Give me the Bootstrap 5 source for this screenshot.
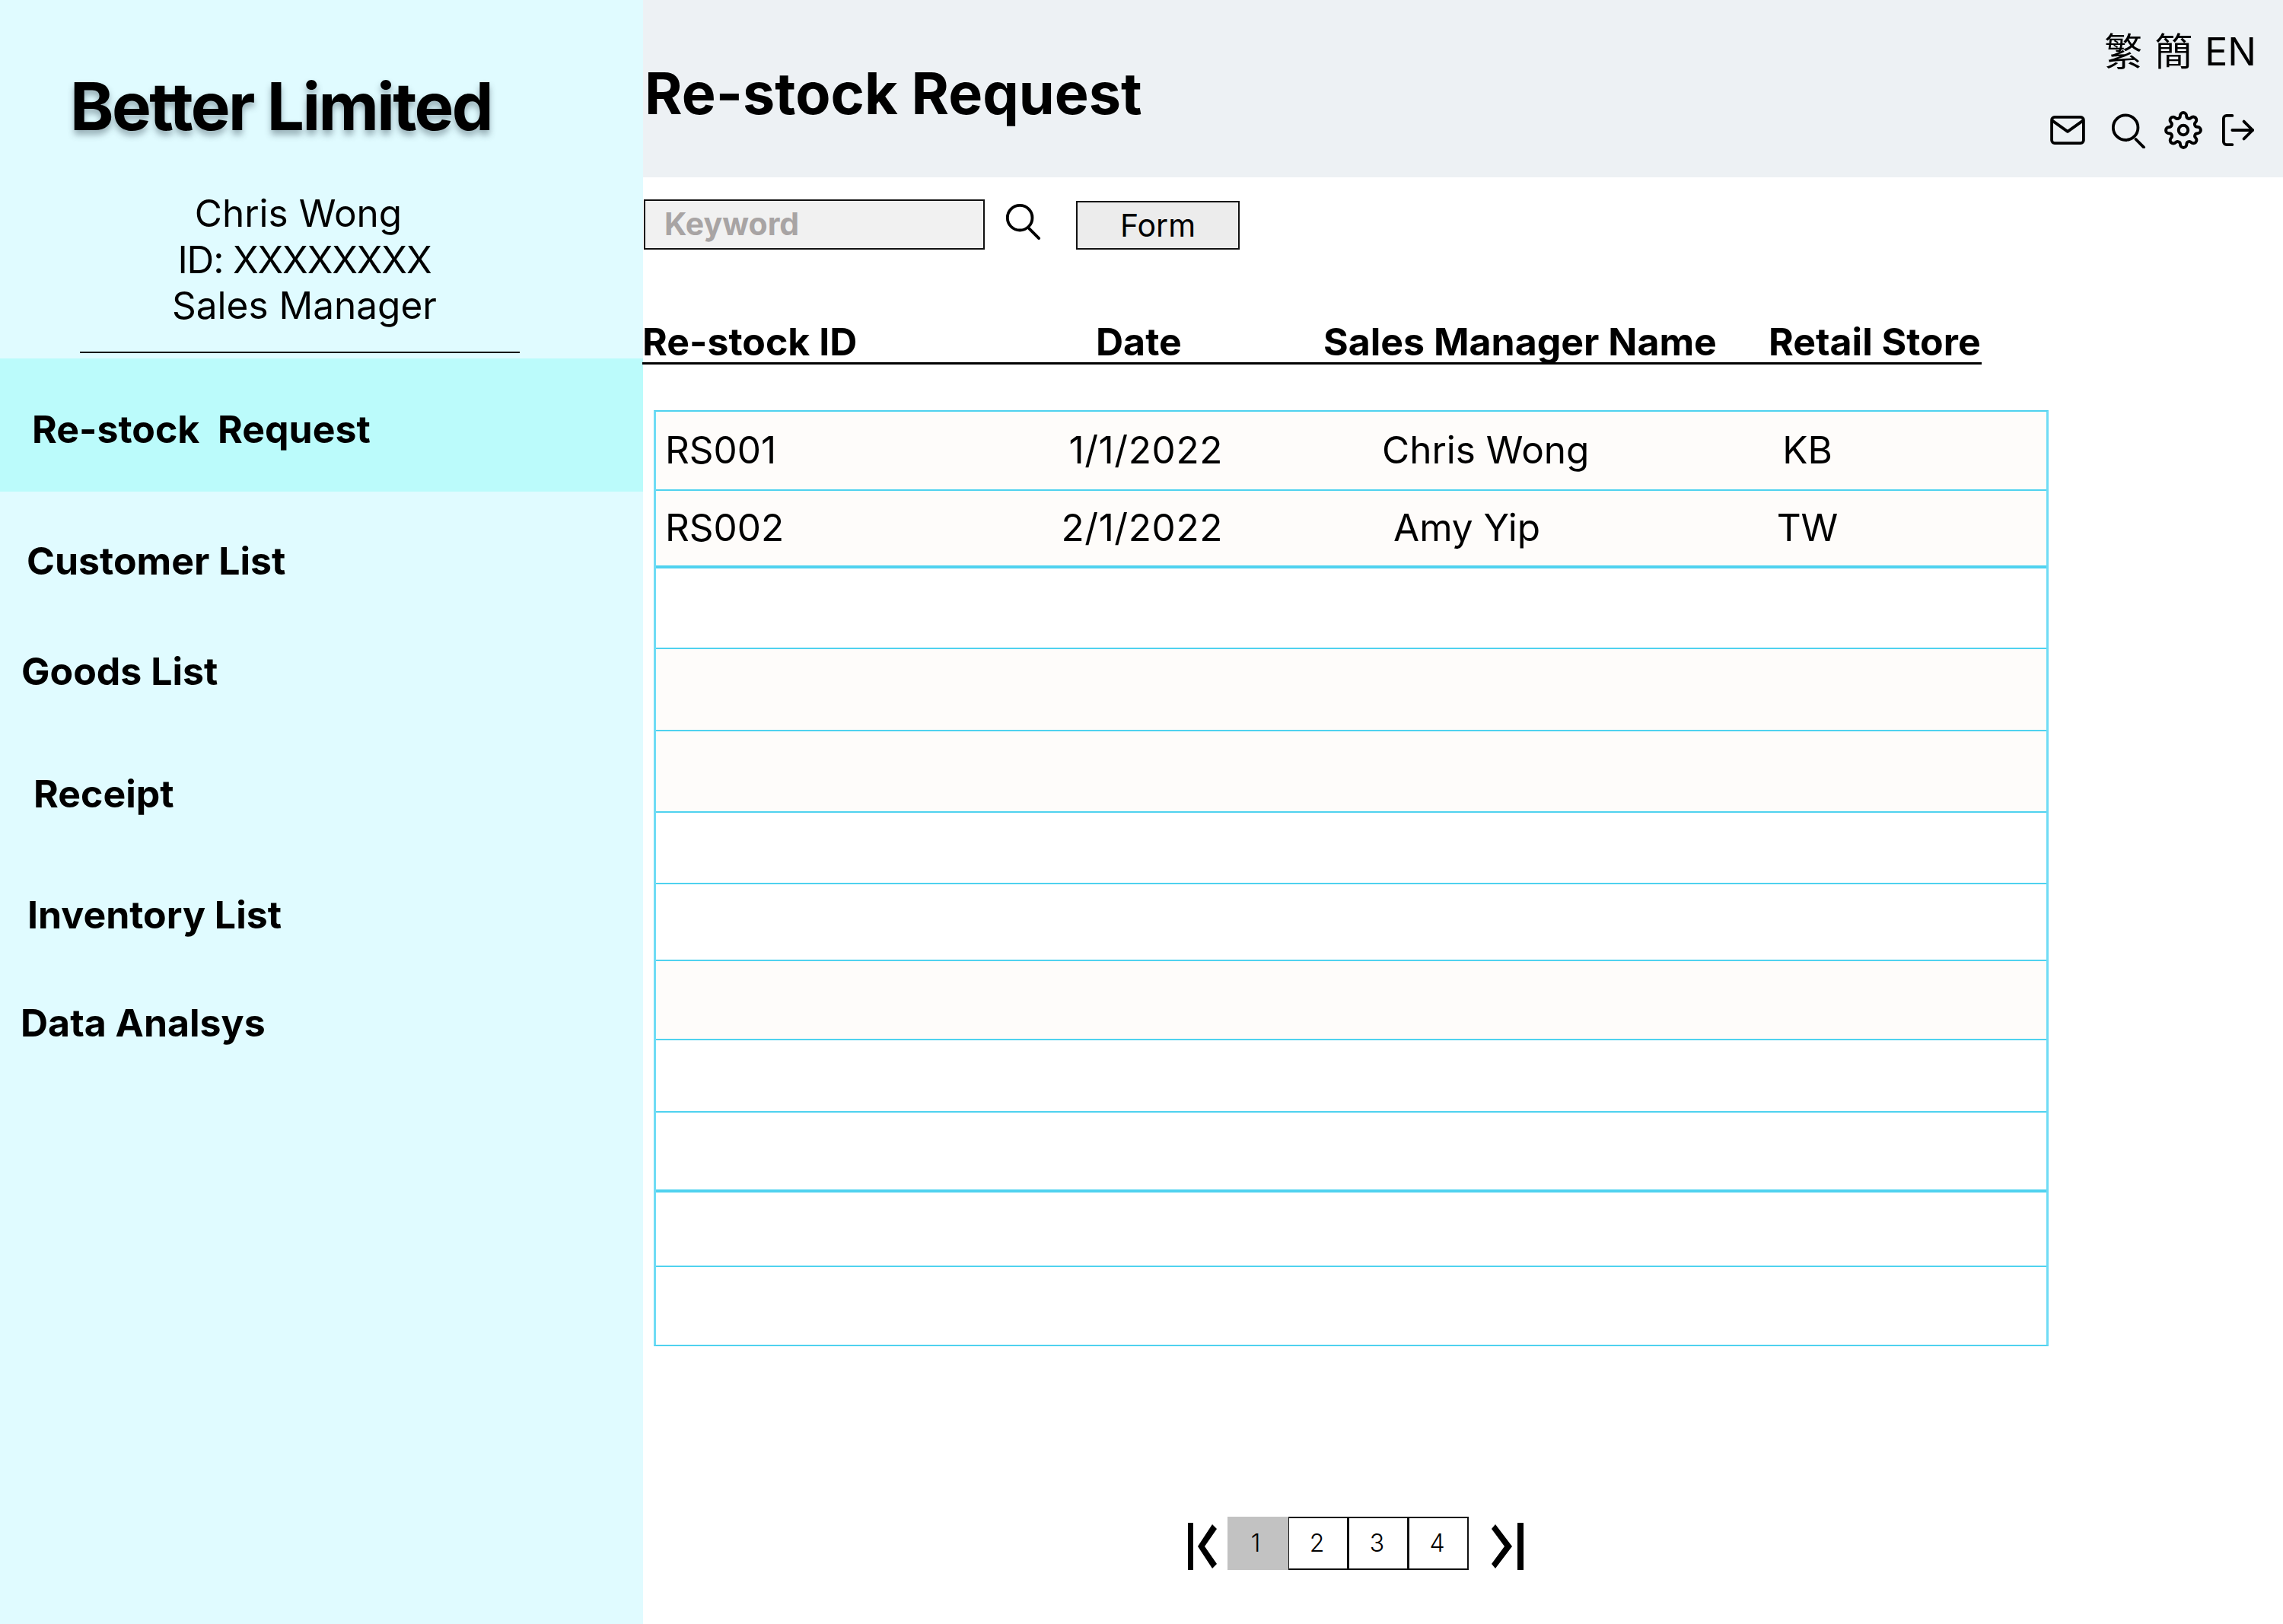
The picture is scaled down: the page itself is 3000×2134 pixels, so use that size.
<!DOCTYPE html>
<html lang="en">

<head>
  <meta charset="UTF-8" />
  <meta name="viewport" content="width=device-width, initial-scale=1" />
  <title>Better Limited - Re-stock Request</title>
  <link href="https://cdn.jsdelivr.net/npm/bootstrap@5.3.3/dist/css/bootstrap.min.css" rel="stylesheet" />
  <style>
    body { font-family: Inter, "Noto Sans", sans-serif; color: #000; background: #fff; }
    .app-shell { width: 3000px; height: 2134px; overflow: hidden; }

    /* sidebar */
    .side-panel { width: 845px; flex: none; background: #e0fbff; }
    .brand-name { font-size: 87px; font-weight: 700; line-height: 106px; margin: 87px 0 0 92px; text-shadow: 0 6px 8px rgba(60, 80, 90, .45); letter-spacing: -2.6px; }
    .profile-box { font-size: 49.5px; line-height: 60.5px; text-align: center; width: 800px; margin-top: 57px; }
    .profile-box div:first-child { padding-right: 16px; }
    .profile-box div:nth-child(2) { letter-spacing: -1.2px; }
    .side-rule { width: 578px; height: 2px; background: #111; margin: 30px 0 7px 105px; }
    .side-menu .nav-link { color: #000; font-size: 50px; font-weight: 700; line-height: 62px; padding: 0; }
    .side-menu .nav-item.is-current { background: #bbfbfb; height: 175px; padding: 62px 0 0 42px; }
    .side-menu .nav-item:nth-child(2) { margin: 60px 0 0 35px; }
    .side-menu .nav-item:nth-child(3) { margin: 83px 0 0 28px; }
    .side-menu .nav-item:nth-child(4) { margin: 99px 0 0 44px; }
    .side-menu .nav-item:nth-child(5) { margin: 97px 0 0 36px; }
    .side-menu .nav-item:nth-child(6) { margin: 80px 0 0 27px; }

    /* top bar */
    .top-bar { height: 233px; background: #edf1f4; padding: 0 38px 0 2px; }
    .page-title { font-size: 75.5px; font-weight: 700; margin: 13px 0 0; line-height: 1; }
    .lang-switch { font-family: Inter, "Noto Sans CJK TC", sans-serif; font-size: 50px; line-height: 60px; margin: 38px -3px 0 0; word-spacing: 2px; }
    .top-icons { margin-top: 48px; }
    .top-icons svg:nth-child(2) { margin-left: 34px; }
    .top-icons svg:nth-child(3) { margin-left: 24px; }
    .top-icons svg:nth-child(4) { margin-left: 26px; }

    /* search row */
    .search-row { padding: 29px 0 0 1px; height: 125px; }
    .keyword-box { width: 448px; height: 66px; border: 2px solid #111; border-radius: 0; background: #f1f1f1; font-size: 41px; font-weight: 700; padding: 0 25px 3px; }
    .keyword-box::placeholder { color: #a8a4a4; opacity: 1; }
    .form-btn { width: 215px; height: 64px; margin: 2px 0 0 46px; border: 2px solid #111; border-radius: 0; background: #ececec; color: #000; font-size: 41px; line-height: 1; padding: 0; }
    .search-glass { margin: 5px 0 0 26px; }

    /* column titles */
    .column-titles { width: 1760px; height: 121px; border-bottom: 3px solid #000; display: grid; grid-template-columns: 596px 299px 585px 1fr; align-items: end; font-size: 50px; font-weight: 700; line-height: 54px; margin-left: -1px; }
    .column-titles div { white-space: nowrap; }

    /* table */
    .stock-table { width: 1833px; margin: 60px 0 0 14px; border: 2px solid #4fd2ef; border-left: 3px solid #6fdcf5; border-right: 3px solid #6fdcf5; border-collapse: separate; border-spacing: 0; font-size: 49.5px; table-layout: fixed; }
    .stock-table td { padding: 0; vertical-align: middle; border-bottom: 2px solid #4fd2ef; line-height: 1; background: #fff; }
    .stock-table tr:last-child td { border-bottom: 0; }
    .stock-table tr.tinted td { background: #fefcfa; }
    .stock-table tr.thick td { border-bottom-width: 4px; }
    .stock-table .cell-id { width: 300px; padding-left: 12px; }
    .stock-table .cell-date { width: 445px; text-align: right; letter-spacing: .6px; }
    .stock-table .cell-name { width: 767px; padding-left: 209px; }
    .stock-table .cell-name.nudged { padding-left: 224px; }
    .stock-table .cell-store span { display: block; width: 150px; margin-left: -74px; text-align: center; }
    .stock-table tr:nth-child(1) { height: 104px; }
    .stock-table tr:nth-child(2) { height: 102px; }
    .stock-table tr:nth-child(3) { height: 106px; }
    .stock-table tr:nth-child(4) { height: 108px; }
    .stock-table tr:nth-child(5) { height: 107px; }
    .stock-table tr:nth-child(6) { height: 94px; }
    .stock-table tr:nth-child(7) { height: 101px; }
    .stock-table tr:nth-child(8) { height: 104px; }
    .stock-table tr:nth-child(9) { height: 95px; }
    .stock-table tr:nth-child(10) { height: 105px; }
    .stock-table tr:nth-child(11) { height: 98px; }
    .stock-table tr:nth-child(12) { height: 102px; }

    /* pager */
    .pager-row { margin-top: 224px; padding-left: 716px; }
    .pager-row svg { margin-top: 8px; }
    .pager-row .pagination { margin: 0 30px 0 14px; }
    .pager-row .page-link { width: 80px; height: 70px; padding: 0 3px 0 0; border: 2px solid #111; border-radius: 0 !important; margin-left: -1px; color: #000; font-size: 32px; font-weight: 300; line-height: 65px; text-align: center; background: #fff; }
    .pager-row .page-item.active .page-link { background: #c2c2c2; border-color: #c2c2c2; color: #000; margin-left: 0; padding-right: 6px; }
  </style>
</head>

<body>
  <div class="app-shell d-flex">

    <!-- Sidebar -->
    <aside class="side-panel">
      <div class="brand-name">Better Limited</div>
      <div class="profile-box">
        <div>Chris Wong</div>
        <div>ID: XXXXXXXX</div>
        <div>Sales Manager</div>
      </div>
      <div class="side-rule"></div>
      <ul class="nav flex-column side-menu">
        <li class="nav-item is-current"><a class="nav-link" href="#">Re-stock&nbsp; Request</a></li>
        <li class="nav-item"><a class="nav-link" href="#">Customer List</a></li>
        <li class="nav-item"><a class="nav-link" href="#">Goods List</a></li>
        <li class="nav-item"><a class="nav-link" href="#">Receipt</a></li>
        <li class="nav-item"><a class="nav-link" href="#">Inventory List</a></li>
        <li class="nav-item"><a class="nav-link" href="#">Data Analsys</a></li>
      </ul>
    </aside>

    <main class="flex-grow-1">
      <!-- Top bar -->
      <header class="top-bar d-flex justify-content-between align-items-start">
        <h1 class="page-title align-self-center">Re-stock Request</h1>
        <div class="d-flex flex-column align-items-end">
          <div class="lang-switch">繁 簡 EN</div>
          <div class="top-icons d-flex align-items-center">
            <svg width="46" height="38" viewBox="0 0 48 40" fill="none" stroke="#000" stroke-width="4" stroke-linecap="round" stroke-linejoin="round"><rect x="2" y="2" width="44" height="36" rx="4"/><path d="M3 7l21 15L45 7"/></svg>
            <svg width="46" height="47" viewBox="0 0 48 48" fill="none" stroke="#000" stroke-width="4" stroke-linecap="round"><circle cx="20" cy="20" r="17"/><path d="M34 36l11 11"/></svg>
            <svg width="50" height="50" viewBox="0 0 24 24" fill="none" stroke="#000" stroke-width="1.9" stroke-linecap="round" stroke-linejoin="round"><circle cx="12" cy="12" r="3"/><path d="M19.4 15a1.65 1.65 0 0 0 .33 1.82l.06.06a2 2 0 1 1-2.83 2.83l-.06-.06a1.65 1.65 0 0 0-1.82-.33 1.65 1.65 0 0 0-1 1.51V21a2 2 0 0 1-4 0v-.09A1.65 1.65 0 0 0 9 19.4a1.65 1.65 0 0 0-1.82.33l-.06.06a2 2 0 1 1-2.83-2.83l.06-.06a1.65 1.65 0 0 0 .33-1.82 1.65 1.65 0 0 0-1.51-1H3a2 2 0 0 1 0-4h.09A1.65 1.65 0 0 0 4.6 9a1.65 1.65 0 0 0-.33-1.82l-.06-.06a2 2 0 1 1 2.83-2.83l.06.06a1.65 1.65 0 0 0 1.82.33H9a1.65 1.65 0 0 0 1-1.51V3a2 2 0 0 1 4 0v.09a1.65 1.65 0 0 0 1 1.51 1.65 1.65 0 0 0 1.82-.33l.06-.06a2 2 0 1 1 2.83 2.83l-.06.06a1.65 1.65 0 0 0-.33 1.82V9a1.65 1.65 0 0 0 1.51 1H21a2 2 0 0 1 0 4h-.09a1.65 1.65 0 0 0-1.51 1z"/></svg>
            <svg width="42" height="44" viewBox="0 0 44 44" fill="none" stroke="#000" stroke-width="4" stroke-linecap="round" stroke-linejoin="round"><path d="M14 2H6a4 4 0 0 0-4 4v32a4 4 0 0 0 4 4h8"/><path d="M14 22h28"/><path d="M30 10l12 12-12 12"/></svg>
          </div>
        </div>
      </header>

      <!-- Search -->
      <div class="search-row d-flex align-items-start">
        <input class="keyword-box form-control" type="text" placeholder="Keyword" />
        <svg class="search-glass" width="48" height="48" viewBox="0 0 48 50" fill="none" stroke="#000" stroke-width="4" stroke-linecap="round"><circle cx="20" cy="20" r="17"/><path d="M33 35l13 13"/></svg>
        <button class="form-btn btn" type="button">Form</button>
      </div>

      <div class="column-titles">
        <div>Re-stock ID</div>
        <div>Date</div>
        <div>Sales Manager Name</div>
        <div>Retail Store</div>
      </div>

      <table class="stock-table">
        <tbody>
          <tr class="tinted"><td class="cell-id">RS001</td><td class="cell-date">1/1/2022</td><td class="cell-name">Chris Wong</td><td class="cell-store"><span>KB</span></td></tr>
          <tr class="tinted thick"><td class="cell-id">RS002</td><td class="cell-date">2/1/2022</td><td class="cell-name nudged">Amy Yip</td><td class="cell-store"><span>TW</span></td></tr>
          <tr><td colspan="4"></td></tr>
          <tr class="tinted"><td colspan="4"></td></tr>
          <tr class="tinted"><td colspan="4"></td></tr>
          <tr><td colspan="4"></td></tr>
          <tr><td colspan="4"></td></tr>
          <tr class="tinted"><td colspan="4"></td></tr>
          <tr><td colspan="4"></td></tr>
          <tr class="thick"><td colspan="4"></td></tr>
          <tr><td colspan="4"></td></tr>
          <tr><td colspan="4"></td></tr>
        </tbody>
      </table>

      <!-- Pager -->
      <nav class="pager-row d-flex align-items-center">
        <svg width="38" height="62" viewBox="0 0 38 62" fill="#000"><rect x="0" y="0" width="7" height="62"/><path d="M13 31L32 2l6 6-16 23 16 23-6 6z"/></svg>
        <ul class="pagination">
          <li class="page-item active"><a class="page-link" href="#">1</a></li>
          <li class="page-item"><a class="page-link" href="#">2</a></li>
          <li class="page-item"><a class="page-link" href="#">3</a></li>
          <li class="page-item"><a class="page-link" href="#">4</a></li>
        </ul>
        <svg width="42" height="62" viewBox="0 0 42 62" fill="#000"><path d="M27 31L5 2 0 8l17 23L0 54l5 6z"/><rect x="34" y="0" width="8" height="62"/></svg>
      </nav>
    </main>
  </div>

  <script src="https://cdn.jsdelivr.net/npm/bootstrap@5.3.3/dist/js/bootstrap.bundle.min.js"></script>
</body>

</html>
